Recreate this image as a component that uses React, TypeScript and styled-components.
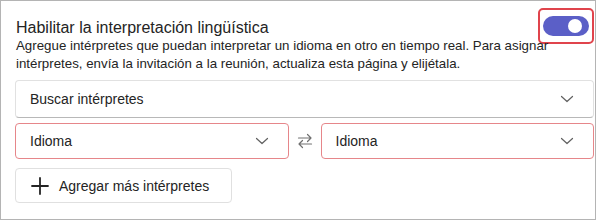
import React from 'react';
import styled, { createGlobalStyle } from 'styled-components';

const GlobalStyle = createGlobalStyle`
  html, body {
    margin: 0;
    padding: 0;
    background: #ffffff;
  }
  body {
    font-family: "Liberation Sans", Arial, sans-serif;
    color: #242424;
  }
`;

const Panel = styled.div`
  box-sizing: border-box;
  width: 596px;
  height: 220px;
  border: 1px solid #b4b4b4;
  padding: 7px 1px 0 14px;
  display: flex;
  flex-direction: column;
`;

const HeaderRow = styled.div`
  display: flex;
  align-items: flex-start;
  justify-content: space-between;
`;

const Title = styled.h2`
  margin: 10px 0 0 1px;
  font-size: 16px;
  font-weight: 400;
  line-height: 20px;
`;

const ToggleFrame = styled.div`
  box-sizing: border-box;
  width: 56px;
  height: 36px;
  border: 2px solid #e0444c;
  border-radius: 5px;
  display: flex;
  align-items: center;
  justify-content: center;
`;

const Track = styled.div<{ $on: boolean }>`
  position: relative;
  width: 46px;
  height: 20px;
  border-radius: 10px;
  background: ${p => (p.$on ? '#5b5fc7' : '#cccccc')};
`;

const Knob = styled.span<{ $on: boolean }>`
  position: absolute;
  top: 3px;
  left: ${p => (p.$on ? '25px' : '3px')};
  width: 14px;
  height: 14px;
  border-radius: 50%;
  background: #ffffff;
`;

const Description = styled.p`
  margin: -7px 0 0 1px;
  font-size: 13.3px;
  line-height: 18px;
  color: #242424;
`;

const Stack = styled.div`
  display: flex;
  flex-direction: column;
  gap: 5px;
  margin-top: 7px;
`;

const Select = styled.div<{ $error?: boolean }>`
  box-sizing: border-box;
  flex: ${p => (p.$error ? '1 1 0' : 'none')};
  display: flex;
  align-items: center;
  justify-content: space-between;
  padding: 0 18px 0 14px;
  border-radius: 4px;
  background: #ffffff;
  font-size: 14px;
  height: ${p => (p.$error ? '36px' : '38px')};
  border: 1px solid ${p => (p.$error ? '#e6868a' : '#e1e1e1')};
  border-bottom-color: ${p => (p.$error ? '#e6868a' : '#b8b8b8')};
`;

const LanguageRow = styled.div`
  display: flex;
  align-items: center;
  gap: 8px;
`;

const SwapIcon = styled.svg`
  flex: none;
  width: 16px;
  height: 16px;
  color: #707070;
`;

const AddButton = styled.button`
  box-sizing: border-box;
  align-self: flex-start;
  display: flex;
  align-items: center;
  gap: 10px;
  height: 35px;
  width: 217px;
  margin-top: 4px;
  padding: 0 0 0 15px;
  border: 1px solid #e0e0e0;
  border-radius: 4px;
  background: #ffffff;
  font-family: "Liberation Sans", Arial, sans-serif;
  font-size: 14px;
  color: #242424;
`;

const Chevron = () => (
  <svg width="16" height="16" viewBox="0 0 16 16" fill="none">
    <path d="M2.5 5.5 8 10.5 13.5 5.5" stroke="#616161" strokeWidth="1.2" strokeLinecap="round" strokeLinejoin="round" />
  </svg>
);

const Plus = () => (
  <svg width="18" height="18" viewBox="0 0 18 18" fill="none">
    <path d="M9 1v16M1 9h16" stroke="#242424" strokeWidth="1.8" strokeLinecap="round" />
  </svg>
);

export default function App() {
  const enabled = true;
  return (
    <>
      <GlobalStyle />
      <Panel>
        <HeaderRow>
          <Title>Habilitar la interpretación lingüística</Title>
          <ToggleFrame>
            <Track $on={enabled}>
              <Knob $on={enabled} />
            </Track>
          </ToggleFrame>
        </HeaderRow>
        <Description>
          Agregue intérpretes que puedan interpretar un idioma en otro en tiempo real. Para asignar
          <br />
          intérpretes, envía la invitación a la reunión, actualiza esta página y elijétala.
        </Description>
        <Stack>
          <Select>
            <span>Buscar intérpretes</span>
            <Chevron />
          </Select>
          <LanguageRow>
            <Select $error>
              <span>Idioma</span>
              <Chevron />
            </Select>
            <SwapIcon viewBox="0 0 16 16" fill="none">
              <path d="M1.5 5h12.5M10.5 1.5 14 5l-3.5 3.5M14.5 11H2M5.5 7.5 2 11l3.5 3.5" stroke="currentColor" strokeWidth="1.2" strokeLinecap="round" strokeLinejoin="round" />
            </SwapIcon>
            <Select $error>
              <span>Idioma</span>
              <Chevron />
            </Select>
          </LanguageRow>
          <AddButton>
            <Plus />
            <span>Agregar más intérpretes</span>
          </AddButton>
        </Stack>
      </Panel>
    </>
  );
}
